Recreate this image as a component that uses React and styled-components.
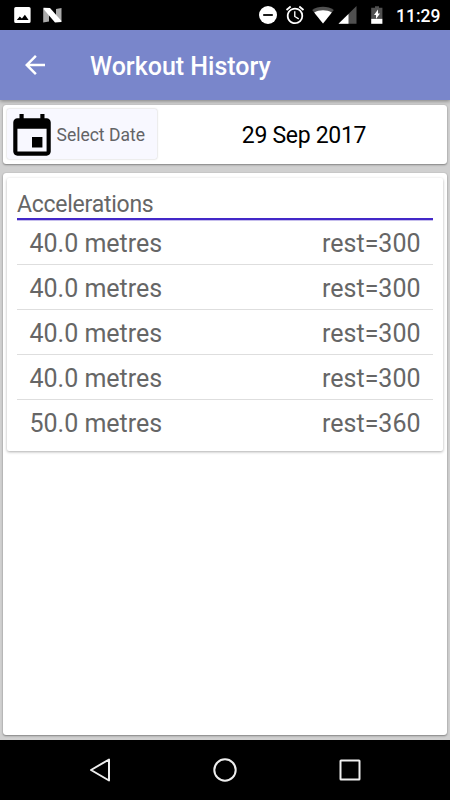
import React from "react";
import styled, { createGlobalStyle } from "styled-components";

const GlobalStyle = createGlobalStyle`
  * { box-sizing: border-box; }
  body { margin: 0; background: #000; font-family: Roboto, "Liberation Sans", sans-serif; }
`;

const Screen = styled.div`
  width: 450px;
  height: 800px;
  display: flex;
  flex-direction: column;
  overflow: hidden;
  background: #d0d0d0;
`;

const StatusBar = styled.div`
  height: 30px;
  flex: none;
  background: #000;
`;

const StatusRow = styled.div`
  display: flex;
  align-items: center;
  height: 30px;
  padding: 0 10px 0 12px;
`;

const StatusIcon = styled.svg`
  display: block;
  flex: none;
  width: ${(p) => p.$w || 20}px;
  height: 20px;
  margin-left: ${(p) => p.$gap || 0}px;
`;

const Spacer = styled.div`
  flex: 1;
`;

const Clock = styled.span`
  width: 44px;
  margin-left: 12px;
  padding-top: 1px;
  color: #fff;
  font-size: 17.5px;
  font-weight: 500;
  line-height: 30px;
  white-space: nowrap;
`;

const AppBar = styled.header`
  height: 70px;
  flex: none;
  display: flex;
  align-items: center;
  padding: 0 20px;
  background: #7986cb;
  box-shadow: 0 1px 4px rgba(0, 0, 0, 0.4);
`;

const BackIcon = styled.svg`
  display: block;
  width: 30px;
  height: 30px;
`;

const Title = styled.h1`
  margin: 4px 0 0 40px;
  color: #fff;
  font-size: 25px;
  font-weight: 500;
  line-height: 30px;
  white-space: nowrap;
`;

const Content = styled.main`
  flex: 1;
  display: flex;
  flex-direction: column;
  gap: 9px;
  padding: 5px 3px 5px;
`;

const Card = styled.section`
  background: #fff;
  border-radius: 3px;
  box-shadow: 0 1px 2px rgba(0, 0, 0, 0.36), 0 0 1px rgba(0, 0, 0, 0.25);
`;

const DateCard = styled(Card)`
  height: 59px;
  flex: none;
  display: flex;
  padding: 4px;
`;

const DateButton = styled.button`
  width: 150px;
  height: 50px;
  flex: none;
  display: flex;
  align-items: center;
  padding: 0;
  border: 0;
  border-radius: 2px;
  background: #f8f8ff;
  box-shadow: 0 0 2px rgba(0, 0, 0, 0.28);
  color: #636366;
  font-family: inherit;
  font-size: 17.5px;
  line-height: 24px;
  white-space: nowrap;
`;

const ButtonLabel = styled.span`
  padding-top: 2px;
`;

const CalendarIcon = styled.svg`
  display: block;
  flex: none;
  width: 50px;
  height: 50px;
  margin: 5px 0 0 -0.5px;
`;

const DateText = styled.div`
  flex: 1;
  padding-left: 8px;
  color: #000;
  font-size: 23px;
  letter-spacing: -0.3px;
  line-height: 53px;
  text-align: center;
`;

const HistoryCard = styled(Card)`
  flex: 1;
  padding: 5px 4px;
`;

const WorkoutCard = styled.article`
  height: 273px;
  padding: 11px 10px 0;
  border-radius: 2px;
  background: #fff;
  box-shadow: 0 1px 3px rgba(0, 0, 0, 0.32);
  color: #666;
`;

const WorkoutName = styled.h2`
  height: 31px;
  margin: 0;
  border-bottom: 2px solid #4328c8;
  box-shadow: 0 1px 0 #c5bdec;
  font-size: 23px;
  letter-spacing: -0.25px;
  font-weight: 400;
  line-height: 32px;
`;

const SetList = styled.ul`
  margin: 0;
  padding: 0;
  list-style: none;
`;

const SetRow = styled.li`
  display: flex;
  justify-content: space-between;
  height: 45px;
  padding: 1px 12.5px 0;
  border-bottom: 1px solid #dedede;
  font-size: 25px;
  line-height: 46px;

  &:last-child { border-bottom: 0; }
`;

const NavBar = styled.nav`
  height: 60px;
  flex: none;
  display: flex;
  justify-content: center;
  align-items: center;
  gap: 95px;
  background: #000;
`;

const NavIcon = styled.svg`
  display: block;
  width: 30px;
  height: 30px;
  fill: none;
  stroke: #eee;
  stroke-width: 2;
  stroke-linejoin: round;
`;

const sets = [
  { distance: "40.0 metres", rest: "rest=300" },
  { distance: "40.0 metres", rest: "rest=300" },
  { distance: "40.0 metres", rest: "rest=300" },
  { distance: "40.0 metres", rest: "rest=300" },
  { distance: "50.0 metres", rest: "rest=360" },
];

function StatusIcons() {
  return (
    <StatusRow>
      <StatusIcon viewBox="0 0 20 20">
        <path fill="#fff" fillRule="evenodd" d="M3.8 2h13.2q1.6 0 1.6 1.6v12.8q0 1.6-1.6 1.6H3.8q-1.6 0-1.6-1.6V3.6Q2.2 2 3.8 2ZM4.8 15h11.8l-3.7-5.2-3 3.8-2.1-2.2Z" />
      </StatusIcon>
      <StatusIcon viewBox="0 0 20 20" $gap={10}>
        <path fill="#aaa" d="M1.2 3.2 7 8.8v7.6l-5.8 1Zm18.3-.2v14L14 12V4Z" />
        <path fill="#fff" d="M1.5 2.8 8 3l11.3 12.8V17L13 17.4 1.5 4Z" />
      </StatusIcon>
      <Spacer />
      <StatusIcon viewBox="0 0 20 20">
        <circle cx="10" cy="10" r="9" fill="#fff" />
        <path stroke="#000" strokeWidth="1.8" d="M5.2 10h9.6" />
      </StatusIcon>
      <StatusIcon viewBox="1 1 22 22" $gap={7}>
        <path fill="#fff" d="m22 5.72-4.6-3.86-1.29 1.53 4.6 3.86L22 5.72zM7.88 3.39 6.6 1.86 2 5.71l1.29 1.53 4.59-3.85zM12.5 8H11v6l4.75 2.85.75-1.23-4-2.37V8zM12 4c-4.97 0-9 4.03-9 9s4.02 9 9 9a9 9 0 0 0 0-18zm0 16c-3.87 0-7-3.13-7-7s3.13-7 7-7 7 3.13 7 7-3.13 7-7 7z" />
      </StatusIcon>
      <StatusIcon viewBox="0 0 22 20" $w={22} $gap={7}>
        <path fill="#505050" d="M11 18.4.2 5C6 .7 16 .7 21.8 5Z" />
        <path fill="#fff" d="M11 18.4 2.2 7.4C7 4.4 15 4.4 19.8 7.4Z" />
      </StatusIcon>
      <StatusIcon viewBox="0 0 20 20" $gap={4}>
        <path fill="#505050" d="M18.5 1v17.8H.5Z" />
        <path fill="#fff" d="M10.5 8.9v9.9H.5Z" />
      </StatusIcon>
      <StatusIcon viewBox="0 0 14 20" $w={14} $gap={12}>
        <path fill="#505050" d="M5 1.2h4v1.6h3.4v11H1.2v-11H5Z" />
        <path fill="#fff" d="M1.2 13.8h11.2v5H1.2Z" />
        <path fill="#fff" d="M8 4.6 4 10h2v4l4-5.6H8Z" />
      </StatusIcon>
      <Clock>11:29</Clock>
    </StatusRow>
  );
}

export default function App() {
  return (
    <Screen>
      <GlobalStyle />
      <StatusBar>
        <StatusIcons />
      </StatusBar>
      <AppBar>
        <BackIcon viewBox="0 0 24 24">
          <path fill="#fff" d="M20 11H7.83l5.59-5.59L12 4l-8 8 8 8 1.41-1.41L7.83 13H20v-2z" />
        </BackIcon>
        <Title>Workout History</Title>
      </AppBar>
      <Content>
        <DateCard>
          <DateButton>
            <CalendarIcon viewBox="0 0 24 24">
              <path d="M17 12h-5v5h5v-5zM16 1v2H8V1H6v2H5c-1.11 0-1.99.9-1.99 2L3 19c0 1.1.89 2 2 2h14c1.1 0 2-.9 2-2V5c0-1.1-.9-2-2-2h-1V1h-2zm3 18H5V8h14v11z" />
            </CalendarIcon>
            <ButtonLabel>Select Date</ButtonLabel>
          </DateButton>
          <DateText>29 Sep 2017</DateText>
        </DateCard>
        <HistoryCard>
          <WorkoutCard>
            <WorkoutName>Accelerations</WorkoutName>
            <SetList>
              {sets.map((set, i) => (
                <SetRow key={i}>
                  <span>{set.distance}</span>
                  <span>{set.rest}</span>
                </SetRow>
              ))}
            </SetList>
          </WorkoutCard>
        </HistoryCard>
      </Content>
      <NavBar>
        <NavIcon viewBox="0 0 30 30">
          <path d="M24 4.5v21L6 15Z" />
        </NavIcon>
        <NavIcon viewBox="0 0 30 30">
          <circle cx="15" cy="15" r="10.7" />
        </NavIcon>
        <NavIcon viewBox="0 0 30 30">
          <rect x="5.5" y="5.5" width="19" height="19" rx=".5" />
        </NavIcon>
      </NavBar>
    </Screen>
  );
}
